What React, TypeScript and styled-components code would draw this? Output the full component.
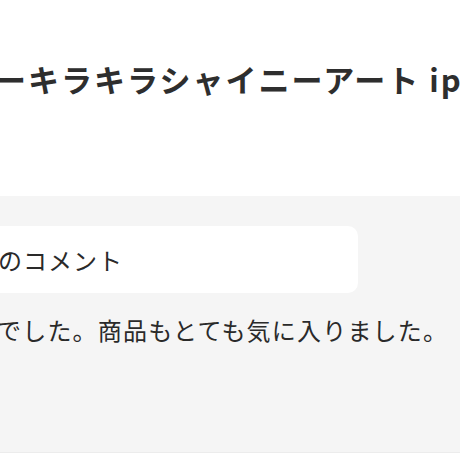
import React from "react";
import styled, { createGlobalStyle } from "styled-components";

const Global = createGlobalStyle`
  html, body { margin: 0; padding: 0; background: #ffffff; }
  body { font-family: "Noto Sans CJK JP", "Noto Sans", sans-serif; color: #333333; overflow: hidden; }
`;

const Page = styled.div`
  width: 460px;
  overflow: hidden;
`;

const Header = styled.header`
  height: 196px;
  box-sizing: border-box;
  padding-top: 55px;
  overflow: hidden;
`;

const Title = styled.h1`
  margin: 0 0 0 -5px;
  font-size: 31px;
  line-height: 48px;
  font-weight: 700;
  letter-spacing: 2px;
  white-space: nowrap;
  color: #2e2e2e;
`;

const CommentSection = styled.section`
  background: #f5f5f5;
  border-bottom: 1px solid #ececec;
  padding-top: 30px;
  box-sizing: border-box;
  height: 257px;
`;

const CommentBox = styled.div`
  width: 398px;
  height: 67px;
  margin-left: -40px;
  box-sizing: border-box;
  padding-left: 38px;
  display: flex;
  align-items: center;
  background: #ffffff;
  border-radius: 10px;
`;

const BoxLabel = styled.span`
  font-size: 24px;
  letter-spacing: 1px;
  color: #2a2a2a;
  white-space: nowrap;
`;

const CommentText = styled.p`
  margin: 20px 0 0 -3px;
  font-size: 24px;
  line-height: 34px;
  letter-spacing: 1.2px;
  white-space: nowrap;
  color: #2a2a2a;
`;

export default function App() {
  return (
    <Page>
      <Global />
      <Header>
        <Title>ーキラキラシャイニーアート ip</Title>
      </Header>
      <CommentSection>
        <CommentBox>
          <BoxLabel>のコメント</BoxLabel>
        </CommentBox>
        <CommentText>でした。商品もとても気に入りました。</CommentText>
      </CommentSection>
    </Page>
  );
}
